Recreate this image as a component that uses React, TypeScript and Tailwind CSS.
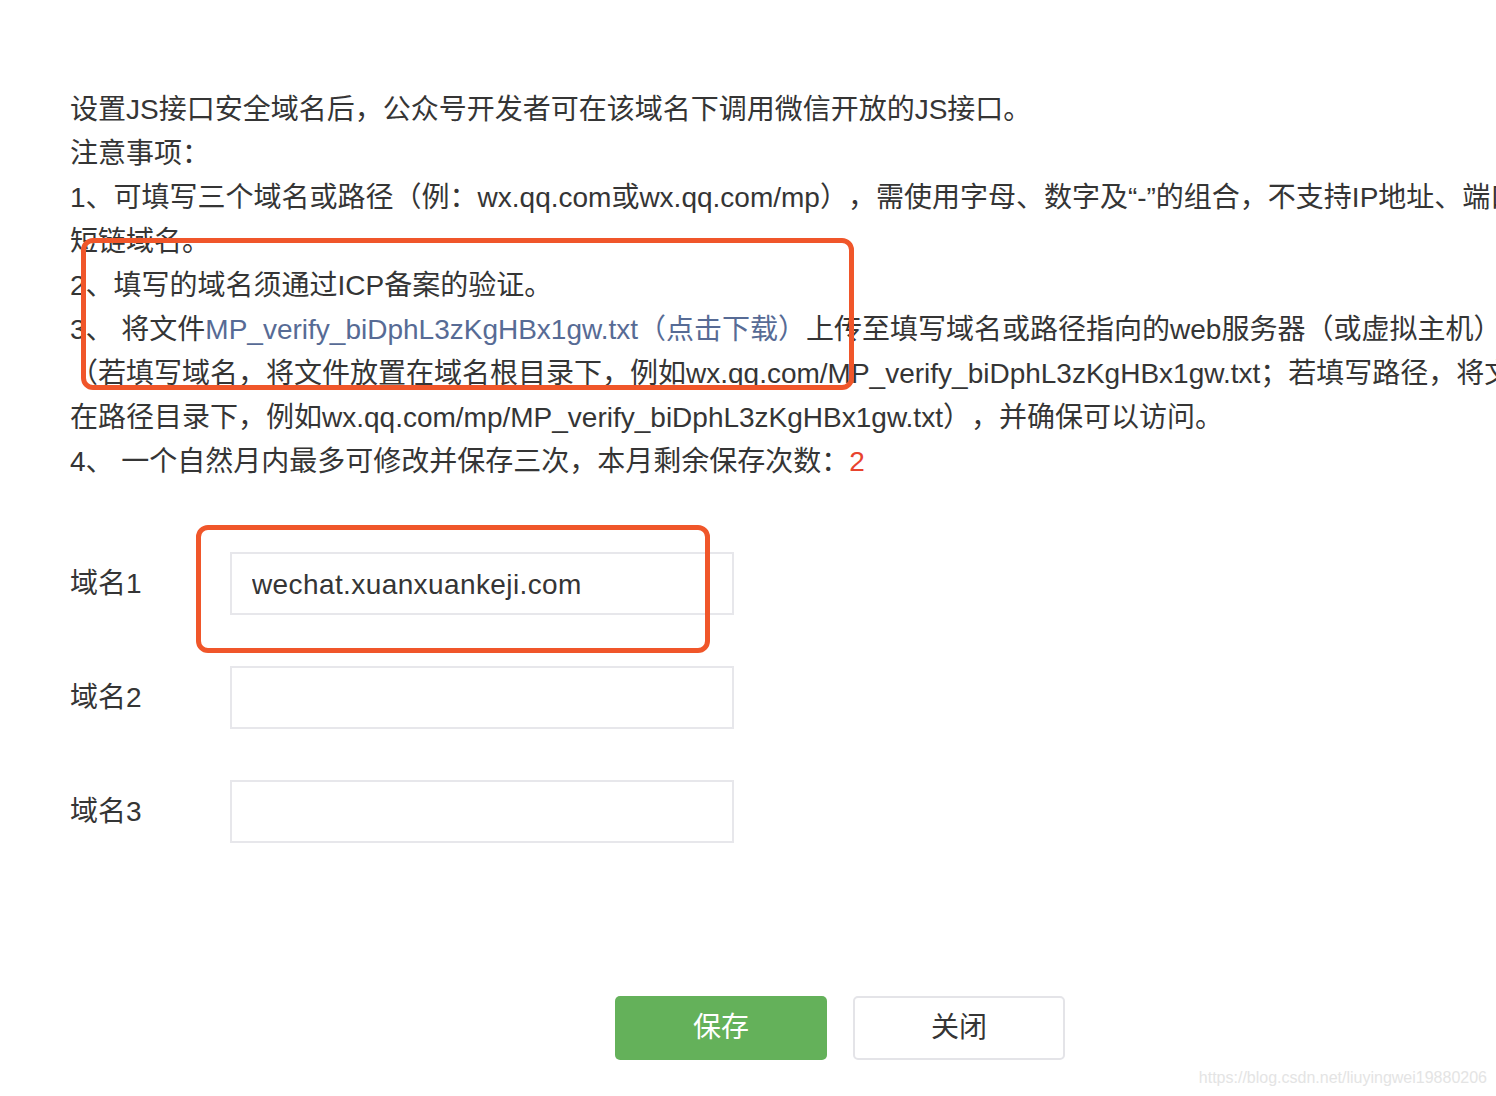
import React from "react";

const font = {
  fontFamily: '"Liberation Sans", "Noto Sans CJK SC", sans-serif',
};

const domains = [
  { label: "域名1", value: "wechat.xuanxuankeji.com" },
  { label: "域名2", value: "" },
  { label: "域名3", value: "" },
];

function Line({ children }: { children: React.ReactNode }) {
  return <div className="whitespace-nowrap h-[44px]">{children}</div>;
}

export default function App() {
  return (
    <div
      className="relative w-[1496px] h-[1096px] overflow-hidden bg-white text-[#353535] [text-spacing-trim:space-all]"
      style={font}
    >
      <div className="w-[1610px] pl-[70px] pt-[88px]">
        <div className="text-[28px] leading-[44px]">
          <Line>设置JS接口安全域名后，公众号开发者可在该域名下调用微信开放的JS接口。</Line>
          <Line>注意事项：</Line>
          <Line>
            1、可填写三个域名或路径（例：wx.qq.com或wx.qq.com/mp），需使用字母、数字及“-”的组合，不支持IP地址、端口号及
          </Line>
          <Line>短链域名。</Line>
          <Line>2、填写的域名须通过ICP备案的验证。</Line>
          <Line>
            3、 将文件
            <a className="text-[#576b95] cursor-pointer">
              MP_verify_biDphL3zKgHBx1gw.txt（点击下载）
            </a>
            上传至填写域名或路径指向的web服务器（或虚拟主机）的目录
          </Line>
          <Line>
            （若填写域名，将文件放置在域名根目录下，例如wx.qq.com/MP_verify_biDphL3zKgHBx1gw.txt；若填写路径，将文件放置
          </Line>
          <Line>
            在路径目录下，例如wx.qq.com/mp/MP_verify_biDphL3zKgHBx1gw.txt），并确保可以访问。
          </Line>
          <Line>
            4、 一个自然月内最多可修改并保存三次，本月剩余保存次数：
            <span className="text-[#e8432e]">2</span>
          </Line>
        </div>

        <div className="mt-[68px] flex flex-col gap-[51px]">
          {domains.map((d) => (
            <div key={d.label} className="flex items-center">
              <label className="w-[160px] text-[28px] leading-[40px]">{d.label}</label>
              <input
                type="text"
                defaultValue={d.value}
                className="w-[504px] h-[63px] border-2 border-[#e7e7eb] pl-[20px] pt-[3px] text-[28px] tracking-[0.4px] text-[#353535] outline-none"
                style={font}
              />
            </div>
          ))}
        </div>

        <div className="mt-[153px] flex justify-center gap-[26px]">
          <button
            type="button"
            className="w-[212px] h-[64px] rounded-[5px] bg-[#64b15a] text-white text-[28px]"
          >
            保存
          </button>
          <button
            type="button"
            className="w-[212px] h-[64px] rounded-[5px] border-2 border-[#e4e4e8] bg-white text-[28px] text-[#353535]"
          >
            关闭
          </button>
        </div>
      </div>

      {/* annotation boxes */}
      <div className="absolute left-[81px] top-[238px] w-[773px] h-[152px] border-[5px] border-[#f0562a] rounded-[12px]" />
      <div className="absolute left-[196px] top-[525px] w-[514px] h-[128px] border-[5px] border-[#f0562a] rounded-[12px]" />

      <div className="absolute right-[9px] top-[1066px] text-[16px] text-[#e4e4e4]">
        https://blog.csdn.net/liuyingwei19880206
      </div>
    </div>
  );
}
